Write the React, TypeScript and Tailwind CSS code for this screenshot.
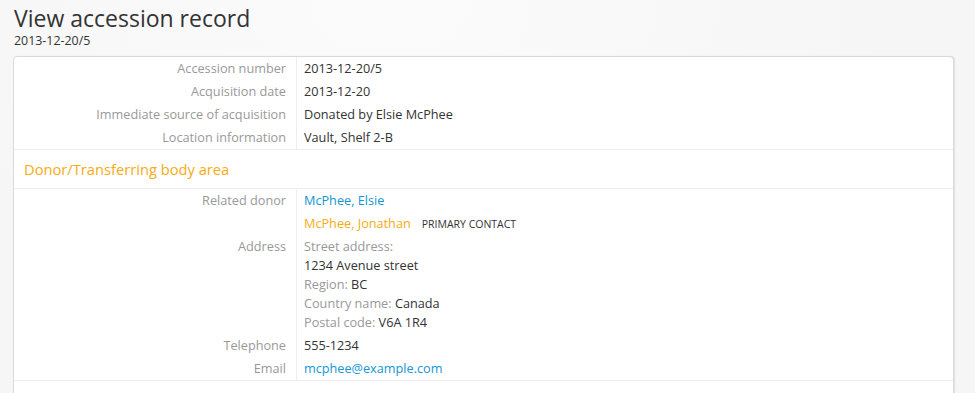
const Field = ({ label, children }: { label?: string; children: React.ReactNode }) => (
  <div className="flex">
    <div className="w-[282px] shrink-0 pr-[10px] text-right text-[#999] py-[2px] leading-[19px]">{label}</div>
    <div className="flex-1 border-l border-[#eee] pl-[7px] py-[2px] text-[#333] leading-[19px]">{children}</div>
  </div>
);

export default function App() {
  return (
    <div
      className="min-h-screen bg-[#f6f6f6] bg-[radial-gradient(ellipse_at_40%_0%,#fbfbfb_0%,#f6f6f6_60%)] pl-[13px] pt-[4px] text-[12.7px]"
      style={{ fontFamily: '"Open Sans", "Liberation Sans", sans-serif' }}
    >
      <h1 className="text-[23px] leading-[28px] mb-[2px] text-[#333] pl-[1px]">View accession record</h1>
      <div className="text-[12.4px] leading-[14px] text-[#333] pl-[1px]">2013-12-20/5</div>
      <div className="mt-[8px] w-[941px] rounded-[4px] border border-[#d9d9d9] bg-white shadow-[1px_0_1px_rgba(0,0,0,0.08)]">
        <div className="border-b border-[#eee]">
          <Field label="Accession number">2013-12-20/5</Field>
          <Field label="Acquisition date">2013-12-20</Field>
          <Field label="Immediate source of acquisition">Donated by Elsie McPhee</Field>
          <Field label="Location information">Vault, Shelf 2-B</Field>
        </div>
        <div className="border-b border-[#eee] pl-[10px] h-[39px] flex items-center text-[14.7px] text-[#f7ab14]">
          Donor/Transferring body area
        </div>
        <div className="border-b border-[#eee]">
          <Field label="Related donor">
            <span className="text-[#1595d3]">McPhee, Elsie</span>
          </Field>
          <Field>
            <span className="text-[#f7ab14]">McPhee, Jonathan</span>
            <span className="ml-[11px] text-[10.5px] leading-none uppercase text-[#333]">Primary contact</span>
          </Field>
          <Field label="Address">
            <div className="text-[#999]">Street address:</div>
            <div>1234 Avenue street</div>
            <div>
              <span className="text-[#999]">Region:</span> BC
            </div>
            <div>
              <span className="text-[#999]">Country name:</span> Canada
            </div>
            <div>
              <span className="text-[#999]">Postal code:</span> V6A 1R4
            </div>
          </Field>
          <Field label="Telephone">555-1234</Field>
          <Field label="Email">
            <span className="text-[#1595d3]">mcphee@example.com</span>
          </Field>
        </div>
        <div className="h-[40px]" />
      </div>
    </div>
  );
}
